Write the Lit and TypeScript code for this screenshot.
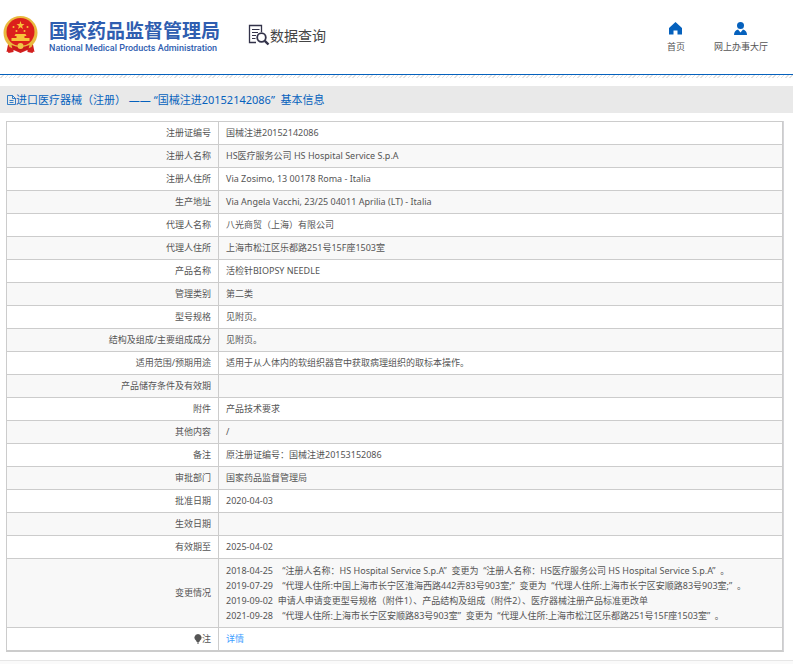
import { LitElement, html, css, svg } from "lit";
import { customElement } from "lit/decorators.js";

interface Field {
  label: string;
  lines: string[];
}

const FIELDS: Field[] = [
  { label: "注册证编号", lines: ["国械注进20152142086"] },
  { label: "注册人名称", lines: ["HS医疗服务公司 HS Hospital Service S.p.A"] },
  { label: "注册人住所", lines: ["Via Zosimo, 13 00178 Roma - Italia"] },
  { label: "生产地址", lines: ["Via Angela Vacchi, 23/25 04011 Aprilia (LT) - Italia"] },
  { label: "代理人名称", lines: ["八光商贸（上海）有限公司"] },
  { label: "代理人住所", lines: ["上海市松江区乐都路251号15F座1503室"] },
  { label: "产品名称", lines: ["活检针BIOPSY NEEDLE"] },
  { label: "管理类别", lines: ["第二类"] },
  { label: "型号规格", lines: ["见附页。"] },
  { label: "结构及组成/主要组成成分", lines: ["见附页。"] },
  { label: "适用范围/预期用途", lines: ["适用于从人体内的软组织器官中获取病理组织的取标本操作。"] },
  { label: "产品储存条件及有效期", lines: [] },
  { label: "附件", lines: ["产品技术要求"] },
  { label: "其他内容", lines: ["/"] },
  { label: "备注", lines: ["原注册证编号：国械注进20153152086"] },
  { label: "审批部门", lines: ["国家药品监督管理局"] },
  { label: "批准日期", lines: ["2020-04-03"] },
  { label: "生效日期", lines: [] },
  { label: "有效期至", lines: ["2025-04-02"] },
  {
    label: "变更情况",
    lines: [
      "2018-04-25 \u00a0 \u00a0“注册人名称：HS Hospital Service S.p.A” \u00a0变更为 \u00a0“注册人名称：HS医疗服务公司 HS Hospital Service S.p.A” \u00a0。",
      "2019-07-29 \u00a0 \u00a0“代理人住所:中国上海市长宁区淮海西路442弄83号903室;” \u00a0变更为 \u00a0“代理人住所:上海市长宁区安顺路83号903室;” \u00a0。",
      "2019-09-02 \u00a0申请人申请变更型号规格（附件1）、产品结构及组成（附件2）、医疗器械注册产品标准更改单",
      "2021-09-28 \u00a0 \u00a0“代理人住所:上海市长宁区安顺路83号903室” \u00a0变更为 \u00a0“代理人住所:上海市松江区乐都路251号15F座1503室” \u00a0。",
    ],
  },
];

const emblem = svg`
  <path d="M5 26 L3 36 L10 34 L17 37 L24 34 L31 36 L29 26 Z" fill="#d3201f"/>
  <circle cx="17" cy="17" r="17" fill="#e9b93f"/>
  <circle cx="17" cy="16" r="14" fill="#dc1f1c"/>
  <path d="M17 5l1 3h3l-2.400 2 .9 3-2.500-1.800-2.500 1.800.9-3-2.400-2h3z" fill="#f8c23a"/>
  <g fill="#f8c23a">
    <circle cx="10" cy="11" r="1"/><circle cx="24" cy="11" r="1"/>
    <circle cx="13" cy="15" r="1"/><circle cx="21" cy="15" r="1"/>
    <path d="M12 18h10l1 2H11zM13 20h8v2h-8zM8 22h18v3H8z"/>
  </g>
  <path d="M4 26q13 8 26 0l-2 5q-11 6-22 0z" fill="#e9b93f"/>
  <path d="M8 29q9 4 18 0l-1 4q-8 3-16 0z" fill="#c91a1a"/>
  <circle cx="17" cy="30" r="3" fill="#f0c648"/>
  <path d="M4 35l6-2v3l-5 1zM30 35l-6-2v3l5 1z" fill="#d3201f"/>`;

@customElement("app-root")
export class AppRoot extends LitElement {
  static styles = css`
    :host {
      display: block;
      font: 9px/15px "Noto Sans", "Noto Sans CJK SC", sans-serif;
      color: #555;
      background: #fff;
    }
    a {
      color: inherit;
      text-decoration: none;
    }
    svg {
      display: block;
      flex: none;
    }
    .header {
      display: flex;
      align-items: center;
      height: 75px;
      box-sizing: border-box;
      padding: 0 25px 4px 3px;
      border-bottom: 1px solid #0561bd;
    }
    .brand {
      display: flex;
      align-items: center;
      gap: 11px;
      color: #2f5eb0;
    }
    .brand-names {
      display: flex;
      flex-direction: column;
      padding-top: 2px;
      white-space: nowrap;
    }
    .brand-cn {
      font: bold 19px/24px "Noto Sans CJK SC", sans-serif;
    }
    .brand-en {
      font: 500 9px/12px Roboto, sans-serif;
    }
    .query {
      display: flex;
      align-items: center;
      margin: 0 auto 0 28px;
      font: 14px/20px "Noto Sans CJK SC", sans-serif;
      color: #444;
      white-space: nowrap;
    }
    .nav {
      display: flex;
      gap: 29px;
      padding-top: 6px;
    }
    .nav a {
      display: flex;
      flex-direction: column;
      align-items: center;
      gap: 4px;
      white-space: nowrap;
    }
    .hatch {
      height: 3px;
      margin-bottom: 8px;
      background: repeating-linear-gradient(135deg, #fff 0 2px, #e2e2e2 2px 3px);
    }
    .title {
      display: flex;
      align-items: center;
      margin: 0;
      padding: 0 7px;
      background: #e9e9e9;
      color: #0561bd;
      font: 11px/27px "Noto Sans", "Noto Sans CJK SC", sans-serif;
      white-space: pre;
    }
    .panel {
      margin: 8px 9px 8px 6px;
      border-right: 1px solid #d4d4d8;
      border-bottom: 1px solid #ccc;
    }
    table {
      width: 100%;
      border-collapse: collapse;
    }
    th,
    td {
      height: 15px;
      padding: 3px 7px 4px;
      border: 1px solid #ccc;
      font-weight: normal;
    }
    th {
      width: 197px;
      text-align: right;
    }
    td {
      text-align: left;
    }
    td.history {
      padding: 4px 7px;
    }
    tr:nth-child(even) {
      background: #f8f8f8;
    }
    .line {
      white-space: pre-wrap;
    }
    .note {
      display: flex;
      align-items: center;
      justify-content: flex-end;
    }
    .detail {
      color: #409eff;
    }
    .footer {
      height: 3px;
      border-top: 1px solid #e6e6e6;
      background: #fafafa;
    }
  `;

  render() {
    return html`
      <header class="header">
        <a class="brand" href="#">
          <svg width="35" height="38" viewBox="0 0 34 38" aria-hidden="true">${emblem}</svg>
          <span class="brand-names">
            <span class="brand-cn">国家药品监督管理局</span>
            <span class="brand-en">National Medical Products Administration</span>
          </span>
        </a>
        <a class="query" href="#">
          <svg width="22" height="22" viewBox="0 0 22 22" fill="none" stroke="#33334a" aria-hidden="true">
            <path d="M8 18.500H1.500V1.500H13.500V8" stroke-width="1.300" />
            <path d="M4 5.500H11.500M4 8.500H10M4 11.500H8M4 14.500H7.500" stroke-width="1.200" />
            <circle cx="13.500" cy="13.500" r="4.300" stroke-width="1.800" />
            <path d="M16.800 16.800L20.500 20.500" stroke-width="2.400" />
          </svg>
          <span>数据查询</span>
        </a>
        <nav class="nav">
          <a href="#">
            <svg width="13" height="13" viewBox="0 0 13 13" fill="#0561bd" aria-hidden="true">
              <path d="M6.500 0L13 6V12.500H8.500V8.500H4.500V12.500H0V6Z" />
            </svg>
            <span>首页</span>
          </a>
          <a href="#">
            <svg width="13" height="13" viewBox="0 0 13 13" fill="#0561bd" aria-hidden="true">
              <circle cx="6.500" cy="3.500" r="3.500" />
              <path d="M0 13Q0 8.500 4 7.500L6.500 10.500L9 7.500Q13 8.500 13 13Z" />
            </svg>
            <span>网上办事大厅</span>
          </a>
        </nav>
      </header>
      <div class="hatch"></div>
      <main>
        <h1 class="title"><svg width="9" height="10" viewBox="0 0 9 10" fill="none" stroke="#0561bd" aria-hidden="true"><path d="M.5.5H5.500L8.500 3.500V9.500H.5ZM5.500.5V3.500H8.500M2.500 5.500H6.500M2.500 7.500H6.500" stroke-width=".8" /></svg><span>进口医疗器械（注册） —— “国械注进20152142086”  基本信息</span></h1>
        <div class="panel">
          <table>
            <tbody>
              ${FIELDS.map(
                (f) => html`<tr>
                  <th scope="row">${f.label}</th>
                  <td class=${f.lines.length > 1 ? "history" : "value"}>${f.lines.map((l) => html`<div class="line">${l}</div>`)}</td>
                </tr>`
              )}
              <tr>
                <th scope="row">
                  <span class="note">
                    <svg width="8" height="10" viewBox="0 0 8 10" fill="#555" aria-hidden="true">
                      <path d="M4 0A3.600 3.600 0 0 1 5.800 6.700L5.300 8H2.700L2.200 6.700A3.600 3.600 0 0 1 4 0ZM3 8.500H5V9.500H3Z" />
                    </svg>
                    <span>注</span>
                  </span>
                </th>
                <td><a class="detail" href="#">详情</a></td>
              </tr>
            </tbody>
          </table>
        </div>
      </main>
      <footer class="footer"></footer>
    `;
  }
}
